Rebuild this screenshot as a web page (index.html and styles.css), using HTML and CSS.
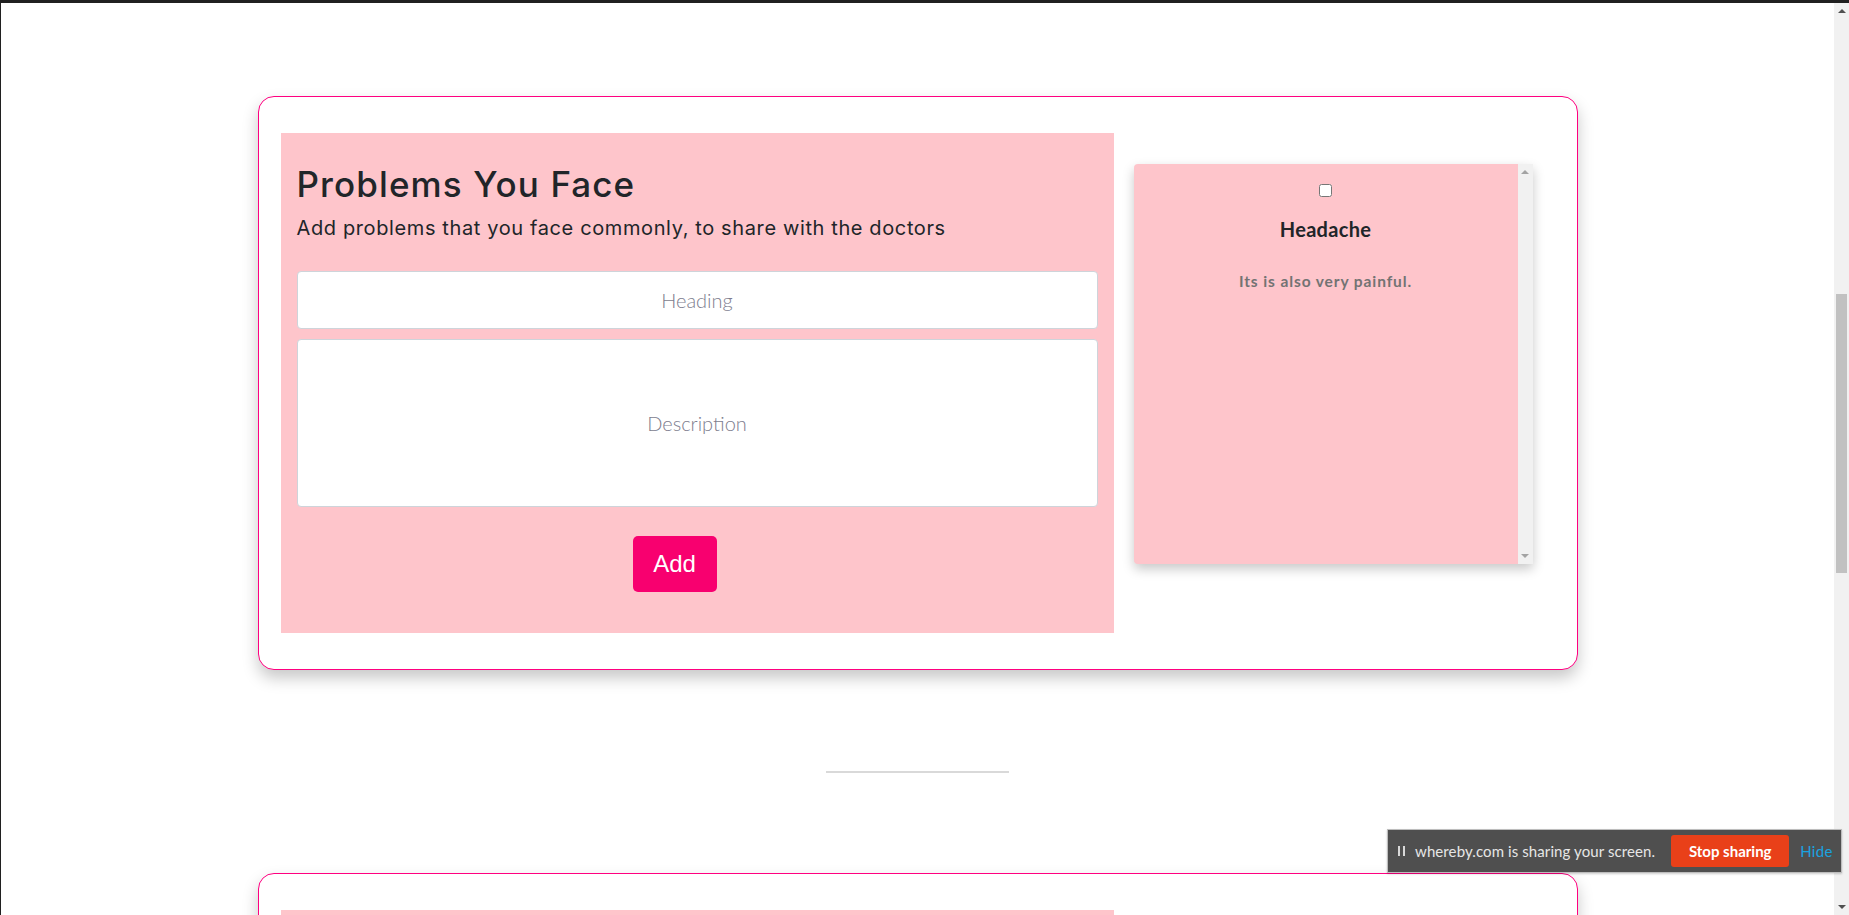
FILE: index.html
```html
<!DOCTYPE html>
<html lang="en">
<head>
<meta charset="utf-8">
<title>Problems You Face</title>
<link rel="stylesheet" href="styles.css">
</head>
<body>
<div class="screen">
  <div class="viewport">
    <div class="page">
      <section class="card">
        <div class="form-panel">
          <h2 class="title">Problems You Face</h2>
          <p class="subtitle">Add problems that you face commonly, to share with the doctors</p>
          <input class="field" type="text" placeholder="Heading">
          <textarea class="field area" placeholder="Description"></textarea>
          <div class="actions"><button class="add-btn" type="button">Add</button></div>
        </div>
        <div class="list-box">
          <div class="list-content">
            <div class="problem">
              <input class="check" type="checkbox">
              <h3 class="problem-title">Headache</h3>
              <p class="problem-desc">Its is also very painful.</p>
            </div>
          </div>
          <div class="mini-scroll">
            <span class="tri-up light"></span>
            <span class="tri-down light"></span>
          </div>
        </div>
      </section>

      <div class="divider"></div>

      <section class="card">
        <div class="form-panel placeholder-panel"></div>
      </section>
    </div>
  </div>
  <div class="vscroll">
    <span class="tri-up dark"></span>
    <div class="vtrack"><div class="vthumb"></div></div>
    <span class="tri-down dark"></span>
  </div>

  <div class="share-bar">
    <svg class="pause" width="8" height="10" viewBox="0 0 8 10"><rect x="0" y="0" width="2" height="10" fill="#d8d8d8"/><rect x="5" y="0" width="2" height="10" fill="#d8d8d8"/></svg>
    <span class="share-text">whereby.com is sharing your screen.</span>
    <button class="stop-btn" type="button">Stop sharing</button>
    <span class="hide-link">Hide</span>
  </div>
</div>
</body>
</html>
```

FILE: styles.css
```css
html, body {
  margin: 0;
  padding: 0;
  background: #202020;
}

.screen {
  position: relative;
  display: flex;
  width: 1849px;
  height: 915px;
  box-sizing: border-box;
  border-top: 3px solid #202020;
  border-left: 1px solid #202020;
  overflow: hidden;
}

.viewport {
  flex: 1;
  background: #ffffff;
  overflow: hidden;
}

.page {
  padding-top: 93px;
}

.card {
  width: 1320px;
  box-sizing: border-box;
  margin: 0 auto;
  border: 1px solid #ff0080;
  border-radius: 16px;
  background: #fff;
  padding: 36px 22px 36px 22px;
  display: flex;
  align-items: flex-start;
  gap: 20px;
  box-shadow: 0 8px 16px rgba(0, 0, 0, 0.22);
}

.form-panel {
  width: 833px;
  box-sizing: border-box;
  background: #fec5cb;
  padding: 30px 16px 41px 16px;
}

.placeholder-panel {
  height: 500px;
}

.title {
  margin: 0;
  font-family: "Inter", "Noto Sans", sans-serif;
  font-weight: 500;
  font-size: 35px;
  line-height: 42px;
  color: #212529;
  letter-spacing: 1.1px;
}

.subtitle {
  margin: 8px 0 28px;
  font-family: "Inter", "Noto Sans", sans-serif;
  font-weight: 400;
  font-size: 20px;
  line-height: 30px;
  color: #212529;
  letter-spacing: 0.62px;
}

.field {
  display: block;
  width: 100%;
  box-sizing: border-box;
  height: 58px;
  margin: 0;
  border: 1px solid #ced4da;
  border-radius: 4px;
  background: #fff;
  text-align: center;
  font-family: "Lato", "Open Sans", sans-serif;
  font-weight: 300;
  font-size: 20px;
  color: #495057;
  outline: none;
}

.field::placeholder {
  color: #7d7d8e;
  opacity: 1;
}

.area {
  height: 168px;
  margin-top: 10px;
  padding: 71px 12px 0;
  line-height: 24px;
  resize: none;
}

.actions {
  display: flex;
  justify-content: center;
  padding-right: 45px;
  margin-top: 29px;
}

.add-btn {
  width: 84px;
  height: 56px;
  border: none;
  border-radius: 5px;
  background: #f8006f;
  color: #fff;
  font-family: "Liberation Sans", Arial, sans-serif;
  font-size: 24px;
  padding: 0;
}

.list-box {
  width: 399px;
  height: 400px;
  margin-top: 31px;
  display: flex;
  background: #fec5cb;
  border-radius: 4px 0 0 4px;
  box-shadow: 0 5px 12px rgba(0, 0, 0, 0.22);
}

.list-content {
  flex: 1;
  padding-top: 20px;
}

.problem {
  display: flex;
  flex-direction: column;
  align-items: center;
}

.check {
  width: 13px;
  height: 13px;
  margin: 0;
}

.problem-title {
  margin: 20px 0 0;
  font-family: "Lato", "Noto Sans", sans-serif;
  font-weight: 700;
  font-size: 20px;
  line-height: 24px;
  color: #212529;
  letter-spacing: 0.3px;
}

.problem-desc {
  margin: 30px 0 0;
  font-family: "Lato", "Noto Sans", sans-serif;
  font-weight: 700;
  font-size: 15.5px;
  line-height: 20px;
  color: #737373;
  letter-spacing: 0.9px;
}

.mini-scroll {
  width: 15px;
  background: #f1f1f1;
  display: flex;
  flex-direction: column;
  justify-content: space-between;
  align-items: center;
  padding: 6px 0;
  box-sizing: border-box;
}

.tri-up, .tri-down {
  display: block;
  width: 0;
  height: 0;
  border-left: 4px solid transparent;
  border-right: 4px solid transparent;
}

.tri-up.light { border-bottom: 4px solid #a3a3a3; }
.tri-down.light { border-top: 4px solid #a3a3a3; }
.tri-up.dark { border-bottom: 4px solid #505050; }
.tri-down.dark { border-top: 4px solid #505050; }

.divider {
  width: 10%;
  height: 2px;
  background: #d9d9d9;
  margin: 101px auto 100px;
}

.vscroll {
  width: 15px;
  flex: none;
  background: #f1f1f1;
  display: flex;
  flex-direction: column;
  align-items: center;
  padding: 6px 0;
  box-sizing: border-box;
}

.vtrack {
  flex: 1;
  width: 100%;
  padding-top: 279px;
  box-sizing: border-box;
  margin: 2px 0;
}

.vthumb {
  width: 11px;
  height: 279px;
  margin: 0 auto;
  background: #c1c1c1;
}

.share-bar {
  position: absolute;
  left: 1386px;
  top: 826px;
  width: 455px;
  height: 44px;
  box-sizing: border-box;
  background: #4f4f4f;
  border: 1px solid #bdbdbd;
  display: flex;
  align-items: center;
  padding: 0 0 0 10px;
  box-shadow: 0 1px 2px rgba(0, 0, 0, 0.2);
}

.pause {
  margin-right: 9px;
}

.share-text {
  font-family: "Lato", "Open Sans", sans-serif;
  font-size: 15px;
  letter-spacing: 0.1px;
  color: #e6e6e6;
  margin-right: 16px;
}

.stop-btn {
  width: 118px;
  height: 32px;
  border: none;
  border-radius: 3px;
  background: #e94019;
  color: #fff;
  font-family: "Lato", "Open Sans", sans-serif;
  font-weight: 700;
  font-size: 15px;
  padding: 0;
  margin-right: 11px;
}

.hide-link {
  font-family: "Lato", "Open Sans", sans-serif;
  font-size: 15px;
  letter-spacing: 0.3px;
  color: #1aa3e0;
}
```
